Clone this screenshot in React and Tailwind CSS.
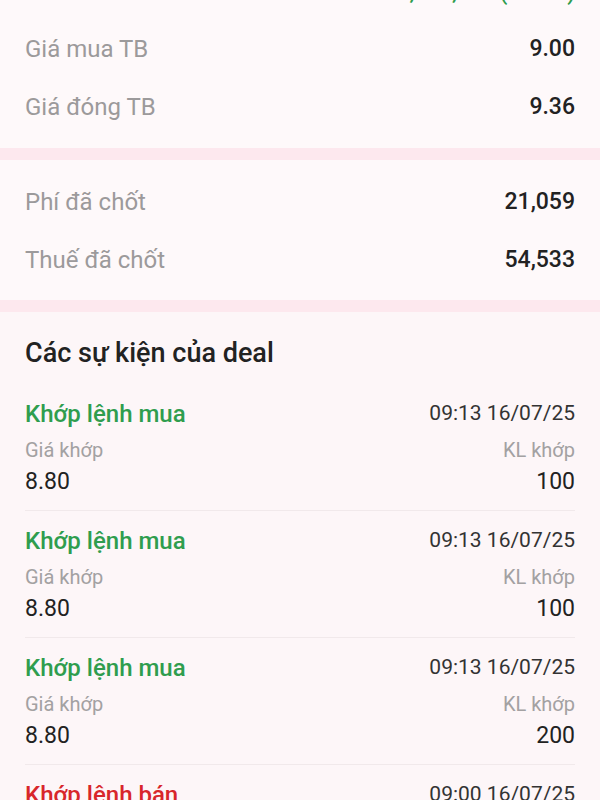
import React from 'react'

const summaryTop = [
  { label: 'Giá mua TB', value: '9.00' },
  { label: 'Giá đóng TB', value: '9.36' },
]

const summaryFee = [
  { label: 'Phí đã chốt', value: '21,059' },
  { label: 'Thuế đã chốt', value: '54,533' },
]

const events = [
  { type: 'buy', title: 'Khớp lệnh mua', time: '09:13 16/07/25', price: '8.80', qty: '100' },
  { type: 'buy', title: 'Khớp lệnh mua', time: '09:13 16/07/25', price: '8.80', qty: '100' },
  { type: 'buy', title: 'Khớp lệnh mua', time: '09:13 16/07/25', price: '8.80', qty: '200' },
  { type: 'sell', title: 'Khớp lệnh bán', time: '09:00 16/07/25', price: '9.36', qty: '400' },
]

const Row = ({ label, value }) => (
  <div className="flex h-[58px] items-center justify-between">
    <span className="text-[24px] text-[#9c9a9b]">{label}</span>
    <span className="text-[23px] font-medium text-[#222222]">{value}</span>
  </div>
)

const EventItem = ({ item }) => (
  <div className="border-b border-[#f1e9eb] pt-4 pb-[14px]">
    <div className="flex h-[28px] items-center justify-between">
      <span
        className={
          item.type === 'buy'
            ? 'text-[24px] font-medium text-[#2f9d4e]'
            : 'text-[24px] font-medium text-[#d8262b]'
        }
      >
        {item.title}
      </span>
      <span className="text-[21px] text-[#333333]">{item.time}</span>
    </div>
    <div className="mt-[10px] flex h-[24px] items-center justify-between text-[20px] text-[#a3a1a2]">
      <span>Giá khớp</span>
      <span>KL khớp</span>
    </div>
    <div className="mt-[6px] flex h-[28px] items-center justify-between text-[23px] text-[#222222]">
      <span>{item.price}</span>
      <span>{item.qty}</span>
    </div>
  </div>
)

export default function App() {
  return (
    <div
      className="h-[800px] w-[600px] overflow-hidden bg-[#fef9fa]"
      style={{ fontFamily: 'Roboto, "Noto Sans", sans-serif' }}
    >
      {/* tong quan gia */}
      <div className="bg-[#fef9fa] px-[25px] pb-3">
        <div className="flex h-[20px] items-start justify-end overflow-hidden">
          <span className="-mt-[19px] text-[22px] leading-[24px] font-medium text-[#2f9d4e]">
            +1,234,567 (4.00%)
          </span>
        </div>
        {summaryTop.map((r) => (
          <Row key={r.label} {...r} />
        ))}
      </div>

      <div className="h-3 bg-[#fde8ee]" />

      {/* phi thue */}
      <div className="bg-[#fef9fa] px-[25px] pt-[13px] pb-[11px]">
        {summaryFee.map((r) => (
          <Row key={r.label} {...r} />
        ))}
      </div>

      <div className="h-3 bg-[#fde8ee]" />

      {/* su kien */}
      <div className="bg-[#fdf6f8] px-[25px]">
        <div className="flex h-[72px] items-start pt-[27px]">
          <h2 className="flex h-[28px] items-center text-[27px] font-medium text-[#222222]">
            Các sự kiện của deal
          </h2>
        </div>
        {events.map((e, i) => (
          <EventItem key={i} item={e} />
        ))}
      </div>
    </div>
  )
}
